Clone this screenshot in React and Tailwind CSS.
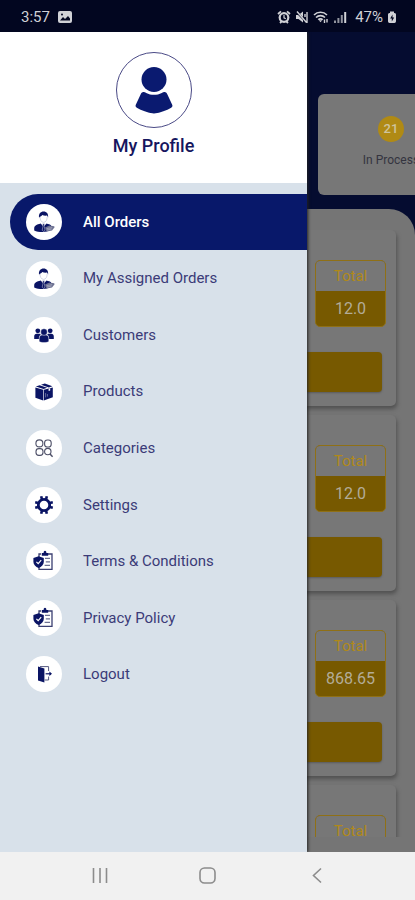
import { clsx } from 'clsx'

function AgentIcon() {
  return (
    <svg viewBox="0 0 22 22" className="w-[22px] h-[22px]" aria-hidden>
      <path d="M6 6.400C5.500 2.800 7.600.6 10.600.6s5 2.200 4.500 5.800l-1-1.800c-1.600.3-3.600.1-4.900-.6-.6 1-1.400 1.800-3.200 2.400z" fill="#0a1464" />
      <path d="M7 5.800c0 3.200 1.400 5.600 3.600 5.600s3.600-2.400 3.600-5.600" fill="#fff" stroke="#b9bdd6" strokeWidth="0.600" />
      <path d="M1.200 19.400v-2c0-2.600 2.600-3.800 6.400-4.800l3 3 3-3c1.800.5 3.400 1 4.600 1.900l-4 6.100c-4 .8-9.600.6-13-1.200z" fill="#0a1464" />
      <path d="M9.600 12.800h2l-.4 2.400.8 4-1.400 1.200-1.400-1.200.8-4z" fill="#0a1464" stroke="#fff" strokeWidth="0.400" />
      <path d="M12 16.400l4.400-1.800 4.800.6.4 1-2.600 3.400-5 .8-1-1z" fill="#6d7192" />
      <path d="M13.600 17.600l5.600-1M14 19l4.600-1" stroke="#c9cbd9" strokeWidth="0.500" />
    </svg>
  )
}

function CustomersIcon() {
  return (
    <svg viewBox="0 0 22 22" className="w-[22px] h-[22px]" fill="#0a1464" aria-hidden>
      <circle cx="4.800" cy="6.800" r="2.400" />
      <circle cx="17.200" cy="6.800" r="2.400" />
      <path d="M1.200 15v-2.600c0-1.600 1-2.600 2.400-2.600h3c.5 0 .9.2 1.200.4-1.400 1-1.800 2.800-1.800 4.800z" />
      <path d="M20.800 15v-2.600c0-1.600-1-2.600-2.400-2.600h-3c-.5 0-.9.2-1.200.4 1.400 1 1.800 2.800 1.800 4.800z" />
      <path d="M6.200 17.600v-3.200c0-2.200 1.200-3.400 3-3.400h3.600c1.800 0 3 1.200 3 3.400v3.200c-1.200.7-2.800 1-4.800 1s-3.600-.3-4.800-1z" stroke="#fff" strokeWidth="0.400" />
      <circle cx="11" cy="8" r="3.300" stroke="#fff" strokeWidth="0.400" />
    </svg>
  )
}

function ProductsIcon() {
  return (
    <svg viewBox="0 0 22 22" className="w-[22px] h-[22px]" fill="#0a1464" aria-hidden>
      <path d="M2.400 6.600l7.800 2.200v10.600l-7.800-2.600z" />
      <path d="M10.800 8.800l9-2.400v9.800l-9 3.200z" />
      <path d="M2.800 5.600l3.800-1.400 7.600 2.600-3.600 1.200z" />
      <path d="M8 3.800l3.800-1.200 7.600 2.600-3.600 1.200z" />
      <path d="M12.600 12v4.400M14.400 13v2.600" stroke="#9a9fc4" strokeWidth="0.600" />
      <path d="M15.600 7.600v2.400l1.600-.5V7.200z" fill="#fff" />
    </svg>
  )
}

function CategoriesIcon() {
  return (
    <svg viewBox="0 0 22 22" className="w-[22px] h-[22px]" fill="none" stroke="#4e5068" strokeWidth="1.100" aria-hidden>
      <circle cx="6.400" cy="6.400" r="3.500" />
      <rect x="11.600" y="3" width="6.600" height="7" rx="2.800" />
      <rect x="3" y="11.600" width="7" height="6.800" rx="2.800" />
      <circle cx="14.800" cy="14.600" r="3.200" />
      <path d="M17 17l2.600 2.800" strokeWidth="1.500" />
    </svg>
  )
}

function SettingsIcon() {
  return (
    <svg viewBox="0 0 22 22" className="w-[22px] h-[22px]" fill="none" stroke="#0a1464" aria-hidden>
      <circle cx="11" cy="11" r="5.700" strokeWidth="2.800" />
      <path
        d="M8.200 2.200l.7 3M13.800 2.200l-.7 3M8.200 19.800l.7-3M13.800 19.800l-.7-3M2.200 8.200l3 .7M2.200 13.800l3-.7M19.800 8.200l-3 .7M19.800 13.800l-3-.7"
        strokeWidth="2.600"
      />
    </svg>
  )
}

function PolicyIcon() {
  return (
    <svg viewBox="0 0 22 22" className="w-[22px] h-[22px]" fill="none" aria-hidden>
      <path d="M8 4H6v3M14 4h5v15.400H6V17" stroke="#3b3f72" strokeWidth="1.300" />
      <path d="M8.800 5.800V3h1.800c0-1.400.6-2.200 1.400-2.200s1.400.8 1.400 2.200h1.800v2.800z" fill="#0a1464" />
      <path d="M12 8.400h5M12.800 11.800h4.200M11.600 15.400h5.400" stroke="#6d7192" strokeWidth="1.200" />
      <path d="M5.600 6.200l5.200 1.800v3.800c0 3-2.200 5-5.200 6.200-3-1.200-5.200-3.200-5.200-6.200V8z" fill="#0a1464" />
      <path d="M3.400 11.800l1.800 1.800 3-3.400" stroke="#fff" strokeWidth="1.200" />
    </svg>
  )
}

function LogoutIcon() {
  return (
    <svg viewBox="0 0 22 22" className="w-[22px] h-[22px]" fill="none" aria-hidden>
      <path d="M5 3.600l6.400 2v14L5 17.400z" fill="#0a1464" />
      <path d="M7 3.600h8.600V8M15.600 13.600V17h-4" stroke="#54587f" strokeWidth="1" />
      <path d="M12.600 10.800H18" stroke="#0a1464" strokeWidth="1.200" />
      <path d="M16.400 8.600l2.600 2.200-2.600 2.200z" fill="#0a1464" />
    </svg>
  )
}

const menu = [
  { label: 'All Orders', icon: AgentIcon, active: true },
  { label: 'My Assigned Orders', icon: AgentIcon },
  { label: 'Customers', icon: CustomersIcon },
  { label: 'Products', icon: ProductsIcon },
  { label: 'Categories', icon: CategoriesIcon },
  { label: 'Settings', icon: SettingsIcon },
  { label: 'Terms & Conditions', icon: PolicyIcon },
  { label: 'Privacy Policy', icon: PolicyIcon },
  { label: 'Logout', icon: LogoutIcon },
]

const orders = [
  { id: 1, total: '12.0' },
  { id: 2, total: '12.0' },
  { id: 3, total: '868.65' },
  { id: 4, total: '' },
]

function StatusBar() {
  return (
    <header className="h-8 shrink-0 bg-[#020620] text-[#d0d1d6] flex items-center justify-between pl-[21px] pr-[18px] pt-[2px]">
      <div className="flex items-center gap-2">
        <span className="text-[15px]">3:57</span>
        <svg viewBox="0 0 14 12" className="w-[14px] h-3" aria-hidden>
          <rect width="14" height="12" rx="2" fill="#d0d1d6" />
          <path d="M2 9.500l3-3.500 2 2 3-3 2 2.500v2z" fill="#020620" />
          <circle cx="4" cy="3.500" r="1" fill="#020620" />
        </svg>
      </div>
      <div className="flex items-center gap-1">
        <svg viewBox="0 0 14 14" className="w-[14px] h-[14px]" aria-hidden>
          <circle cx="7" cy="7.500" r="5.400" fill="#d0d1d6" />
          <path d="M1 4l3-2.600M13 4l-3-2.600M3 13l1.500-1.500M11 13l-1.500-1.500" stroke="#d0d1d6" strokeWidth="1.800" />
          <circle cx="7" cy="7.500" r="3.200" fill="#020620" />
          <path d="M7 5v2.800l1.800 1" fill="none" stroke="#d0d1d6" strokeWidth="1.200" />
        </svg>
        <svg viewBox="0 0 14 14" className="w-[14px] h-[14px]" aria-hidden>
          <path d="M1 5h2.500L8 1.500v11L3.500 9H1z" fill="#d0d1d6" />
          <path d="M1 1.500l11 11" stroke="#020620" strokeWidth="2" />
          <path d="M2 1.500l9.500 11M12 2v11M10 4v3" stroke="#d0d1d6" strokeWidth="1.400" />
        </svg>
        <svg viewBox="0 0 16 14" className="w-4 h-[14px]" fill="none" stroke="#d0d1d6" aria-hidden>
          <path d="M1 5c3.500-3.600 9.500-3.600 13 0M3 7.500c2.500-2.500 6.500-2.500 9 0M5.300 9.800c1.200-1.300 3.200-1.300 4.400 0" strokeWidth="1.600" />
          <path d="M5.800 10.200h3.400L7.500 12.300z" fill="#d0d1d6" stroke="none" />
          <path d="M11.500 9.500v3.500M14 9v3.500" strokeWidth="1.400" />
        </svg>
        <svg viewBox="0 0 14 14" className="w-[14px] h-[14px]" fill="#d0d1d6" aria-hidden>
          <path d="M1 10.500h2V13H1zM4.400 8h2v5h-2zM7.800 5h2v8h-2z" fillOpacity="0.700" />
          <path d="M11.200 2h2v11h-2z" />
        </svg>
        <span className="text-[15px] pl-1">47%</span>
        <svg viewBox="0 0 10 14" className="w-[10px] h-[14px]" aria-hidden>
          <path d="M3 3V1.500h4V3h.5C8.500 3 9 3.800 9 4.800V11c0 1.200-.6 2-1.600 2H2.600C1.600 13 1 12.200 1 11V4.800C1 3.800 1.500 3 2.500 3z" fill="#d0d1d6" />
          <path d="M5.500 4.500L3.200 8.500h1.600v3l2.400-4H5.500z" fill="#020620" />
        </svg>
      </div>
    </header>
  )
}

function OrderCard({ total }) {
  return (
    <article className="h-44 shrink-0 bg-[#777] rounded-[5px] shadow-[1px_3px_4px_#505050] pt-[30px] pr-[10px] flex flex-col gap-[25px]">
      <div className="self-end w-[71px] h-[67px] rounded-[5px] overflow-hidden border border-[#8f7016] bg-[#775900] text-center">
        <p className="h-[30px] leading-[30px] text-[15px] bg-[#777] text-[#b0891a]">Total</p>
        <p className="h-9 leading-9 text-base text-[#b3ac98]">{total}</p>
      </div>
      <div className="h-10 mr-1 rounded-[4px] bg-[#775900] shadow-[0_1px_2px_#5c5c5c]" />
    </article>
  )
}

function Dashboard() {
  return (
    <div className="h-full flex flex-col bg-[#050c30] overflow-hidden">
      <div className="pt-[62px] pb-[14px] flex justify-end">
        <div className="w-[146px] h-[101px] shrink-0 -mr-[49px] rounded-[6px] bg-[#777] flex flex-col items-center pt-[22px]">
          <span className="size-[26px] rounded-full bg-[#b08a14] text-[#cfc49c] text-[13px] font-medium leading-[26px] text-center">
            21
          </span>
          <p className="mt-2 text-xs leading-5 text-[#34343f]">In Process</p>
        </div>
      </div>
      <div className="flex-1 min-h-0 flex flex-col bg-[#757575] rounded-tr-[26px] pt-[21px] pb-[15px]">
        <div className="flex-1 min-h-0 overflow-hidden flex flex-col gap-[9px] pl-5 pr-[19px]">
          {orders.map((o) => (
            <OrderCard key={o.id} total={o.total} />
          ))}
        </div>
      </div>
    </div>
  )
}

function Drawer() {
  return (
    <aside className="absolute inset-y-0 left-0 w-[74%] bg-[#d8e1ea] shadow-[1px_0_3px_#222]">
      <div className="h-[151px] bg-white flex flex-col items-center pt-5">
        <div className="size-[76px] rounded-full border border-[#4a4a86] flex items-center justify-center">
          <svg viewBox="0 0 40 50" className="w-10 h-[50px]" fill="#0a1a70" aria-hidden>
            <circle cx="20" cy="14.500" r="12.500" />
            <path d="M8.600 27.200c1.400-.4 2.400 0 3.600.7 4.800 2.600 10.800 2.600 15.600 0 1.200-.7 2.200-1.100 3.600-.7 1 .3 1.400 1 1.900 2l4.900 10.600c.5 1.200.2 2.200-1 2.900-4.800 2.600-10.400 5-17.200 5.900-6.800-.9-12.400-3.300-17.200-5.900-1.200-.7-1.500-1.700-1-2.900l4.900-10.600c.5-1 .9-1.700 1.900-2z" />
          </svg>
        </div>
        <h1 className="mt-[6px] text-[18px] leading-6 font-medium text-[#16165e]">My Profile</h1>
      </div>
      <nav className="pt-[11px]">
        <ul className="h-[509px] grid auto-rows-fr">
          {menu.map(({ label, icon: Icon, active }) => (
            <li key={label} className="pl-[10px]">
              <a
                href="#"
                className={clsx(
                  'h-14 rounded-l-full pl-4 flex items-center gap-[21px] text-[15px]',
                  active ? 'bg-[#08186a] text-white font-medium' : 'text-[#3b3b78]'
                )}
              >
                <span className="size-9 shrink-0 rounded-full bg-white flex items-center justify-center">
                  <Icon />
                </span>
                {label}
              </a>
            </li>
          ))}
        </ul>
      </nav>
    </aside>
  )
}

function NavBar() {
  return (
    <footer className="h-12 shrink-0 bg-[#f1f1f1] grid grid-cols-3 px-[45px]">
      <button type="button" aria-label="Recent apps" className="flex items-center justify-center">
        <svg viewBox="0 0 18 18" className="w-[18px] h-[18px]" stroke="#8c8c8c" strokeWidth="1.600" aria-hidden>
          <path d="M3.500 1v15M10 1v15M16.500 1v15" />
        </svg>
      </button>
      <button type="button" aria-label="Home" className="flex items-center justify-center">
        <svg viewBox="0 0 18 18" className="w-[18px] h-[18px]" fill="none" stroke="#8c8c8c" strokeWidth="1.600" aria-hidden>
          <rect x="2" y="1" width="15" height="15" rx="4.500" />
        </svg>
      </button>
      <button type="button" aria-label="Back" className="flex items-center justify-center">
        <svg viewBox="0 0 18 18" className="w-[18px] h-[18px]" fill="none" stroke="#8c8c8c" strokeWidth="1.600" aria-hidden>
          <path d="M14 1.500l-7.500 7 7.500 7" />
        </svg>
      </button>
    </footer>
  )
}

export default function App() {
  return (
    <div className="h-screen flex flex-col overflow-hidden font-['Roboto',sans-serif]">
      <StatusBar />
      <main className="relative flex-1 min-h-0 overflow-hidden">
        <Dashboard />
        <Drawer />
      </main>
      <NavBar />
    </div>
  )
}
